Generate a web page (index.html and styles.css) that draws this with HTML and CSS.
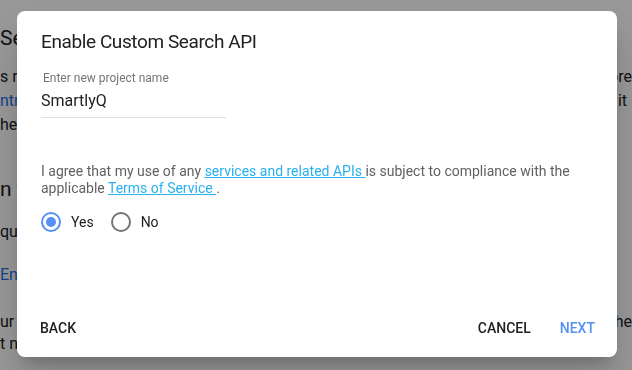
FILE: index.html
```html
<!DOCTYPE html>
<html lang="en">
<head>
<meta charset="UTF-8">
<meta name="viewport" content="width=device-width, initial-scale=1.0">
<title>Enable Custom Search API</title>
<link rel="stylesheet" href="styles.css">
</head>
<body>

<div class="page">
    <h2 class="page-title">Search</h2>
    <p class="line"><span>s requires a project</span><span>more</span></p>
    <p class="line"><a href="#">ntrol Panel</a><span class="pad">it</span></p>
    <p class="line"><span>he search engine</span></p>
    <h2 class="page-title second">n to the API</h2>
    <p class="line"><span>quired</span></p>
    <p class="line link-line"><a href="#">Engine ID</a></p>
    <p class="line tight first"><span>ur app</span><span>the</span></p>
    <p class="line tight"><span>t need</span></p>
</div>

<div class="scrim"></div>

<div class="dialog" role="dialog" aria-labelledby="dialogTitle">
    <h1 id="dialogTitle">Enable Custom Search API</h1>

    <div class="field">
        <label for="projectName">Enter new project name</label>
        <input type="text" id="projectName" name="projectName" value="SmartlyQ">
    </div>

    <p class="terms">
        I agree that my use of any <a href="#">services and related APIs </a> is subject to compliance with the
        applicable <a href="#">Terms of Service </a>.
    </p>

    <div class="radios">
        <label class="radio">
            <input type="radio" name="agree" value="yes" checked>
            <span class="dot"></span>
            Yes
        </label>
        <label class="radio">
            <input type="radio" name="agree" value="no">
            <span class="dot"></span>
            No
        </label>
    </div>

    <div class="actions">
        <button type="button" class="btn">Back</button>
        <span class="spacer"></span>
        <button type="button" class="btn">Cancel</button>
        <button type="button" class="btn primary">Next</button>
    </div>
</div>

</body>
</html>
```

FILE: styles.css
```css
body {
    margin: 0;
    font-family: Roboto, Arial, sans-serif;
    background: #fff;
    color: #202124;
    overflow: hidden;
}
.page {
    padding-top: 26px;
}
.page-title {
    margin: 0;
    font-size: 21px;
    font-weight: 400;
    line-height: 24px;
}
.page-title.second {
    margin-top: 40px;
}
.line {
    display: flex;
    justify-content: space-between;
    margin: 0;
    font-size: 16px;
    line-height: 24px;
}
.page-title + .line {
    margin-top: 15px;
}
.page-title.second + .line {
    margin-top: 19px;
}
.line a {
    color: #1a73e8;
    text-decoration: none;
}
.line .pad {
    padding-right: 5px;
}
.link-line {
    margin-top: 19px;
}
.line.tight {
    line-height: 22px;
}
.line.tight.first {
    margin-top: 24px;
}
.scrim {
    position: fixed;
    inset: 0;
    background: rgba(0, 0, 0, 0.4);
}
.dialog {
    position: absolute;
    left: 17px;
    top: 11px;
    width: 600px;
    height: 346px;
    box-sizing: border-box;
    padding: 19px 24px 0 24px;
    background: #fff;
    border-radius: 8px;
    box-shadow: 0 11px 15px -7px rgba(0, 0, 0, 0.2), 0 24px 38px 3px rgba(0, 0, 0, 0.14);
    display: flex;
    flex-direction: column;
}
h1 {
    margin: 0;
    font-size: 19px;
    letter-spacing: -0.4px;
    font-weight: 400;
    line-height: 24px;
    color: #212121;
}
.field {
    display: flex;
    flex-direction: column;
    width: 185px;
    margin-top: 17px;
}
.field label {
    font-size: 12px;
    line-height: 14px;
    color: #757575;
    padding-left: 2px;
}
.field input {
    border: none;
    border-bottom: 1px solid #e0e0e0;
    padding: 6px 0 7px;
    font-family: inherit;
    font-size: 16px;
    color: #212121;
    outline: none;
}
.terms {
    margin: 45px 0 0;
    font-size: 14px;
    line-height: 17px;
    color: #616161;
}
.terms a {
    color: #29b0ee;
}
.radios {
    display: flex;
    gap: 17px;
    margin-top: 15px;
}
.radio {
    display: flex;
    align-items: center;
    gap: 10px;
    font-size: 14px;
    color: #212121;
    cursor: pointer;
}
.radio input {
    display: none;
}
.dot {
    width: 20px;
    height: 20px;
    box-sizing: border-box;
    border: 2px solid #757575;
    border-radius: 50%;
    display: flex;
    align-items: center;
    justify-content: center;
}
.radio input:checked + .dot {
    border-color: #5591f5;
}
.radio input:checked + .dot::after {
    content: "";
    width: 10px;
    height: 10px;
    border-radius: 50%;
    background: #5591f5;
}
.actions {
    display: flex;
    align-items: center;
    margin: auto -10px 11px -9px;
    gap: 13px;
}
.spacer {
    flex: 1;
}
.btn {
    height: 36px;
    padding: 0 8px;
    border: none;
    background: none;
    font-family: inherit;
    font-size: 14px;
    font-weight: 500;
    text-transform: uppercase;
    color: #212121;
    cursor: pointer;
}
.btn.primary {
    color: #5591f5;
}
```
